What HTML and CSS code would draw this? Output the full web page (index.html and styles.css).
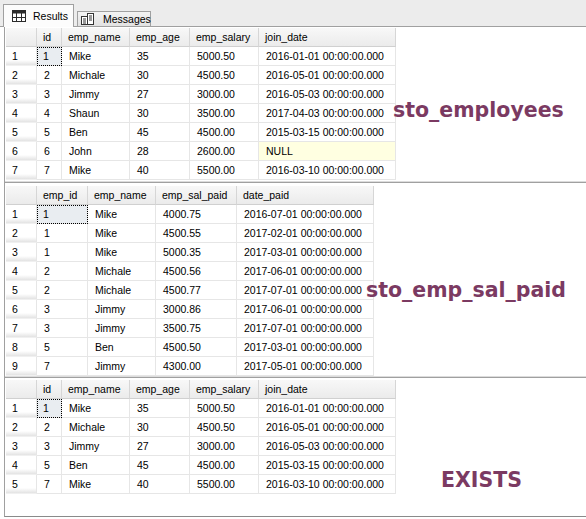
FILE: index.html
```html
<!DOCTYPE html>
<html>
<head>
<meta charset="utf-8">
<link rel="stylesheet" href="styles.css">
</head>
<body>
<div class="tabs">
  <div class="tab active">
    <svg class="ico" width="14" height="12" viewBox="0 0 14 12"><rect x="0.5" y="0.5" width="13" height="11" fill="#fff" stroke="#2b2b2b"/><rect x="0" y="0" width="14" height="3.5" fill="#2b2b2b"/><path d="M0 7.5h14M4.5 3v9M9.5 3v9" stroke="#2b2b2b" fill="none"/></svg>
    <span>Results</span>
  </div>
  <div class="tab">
    <svg class="ico" width="13" height="12" viewBox="0 0 13 12"><rect x="6.5" y="0.5" width="6" height="11" fill="#fff" stroke="#333"/><path d="M8 3h3M8 5h3M8 7h3" stroke="#333"/><rect x="0.5" y="3.5" width="6" height="8" fill="#fff" stroke="#333"/><path d="M2 6h3M2 8h3M2 10h3" stroke="#333"/></svg>
    <span>Messages</span>
  </div>
</div>
<div class="results">
  <div class="pane pane1">
    <table class="grid g1">
      <colgroup><col class="c-rh"><col class="c-id"><col class="c-name"><col class="c-age"><col class="c-sal"><col class="c-date"></colgroup>
      <thead><tr><th class="rh"></th><th>id</th><th>emp_name</th><th>emp_age</th><th>emp_salary</th><th>join_date</th></tr></thead>
      <tbody>
        <tr><td class="rh">1</td><td class="sel">1</td><td>Mike</td><td>35</td><td>5000.50</td><td>2016-01-01 00:00:00.000</td></tr>
        <tr><td class="rh">2</td><td>2</td><td>Michale</td><td>30</td><td>4500.50</td><td>2016-05-01 00:00:00.000</td></tr>
        <tr><td class="rh">3</td><td>3</td><td>Jimmy</td><td>27</td><td>3000.00</td><td>2016-05-03 00:00:00.000</td></tr>
        <tr><td class="rh">4</td><td>4</td><td>Shaun</td><td>30</td><td>3500.00</td><td>2017-04-03 00:00:00.000</td></tr>
        <tr><td class="rh">5</td><td>5</td><td>Ben</td><td>45</td><td>4500.00</td><td>2015-03-15 00:00:00.000</td></tr>
        <tr><td class="rh">6</td><td>6</td><td>John</td><td>28</td><td>2600.00</td><td class="null">NULL</td></tr>
        <tr><td class="rh">7</td><td>7</td><td>Mike</td><td>40</td><td>5500.00</td><td>2016-03-10 00:00:00.000</td></tr>
      </tbody>
    </table>
    <div class="label l1">sto_employees</div>
  </div>
  <div class="pane pane2">
    <table class="grid g2">
      <colgroup><col class="c-rh"><col class="c-eid"><col class="c-name2"><col class="c-paid"><col class="c-date2"></colgroup>
      <thead><tr><th class="rh"></th><th>emp_id</th><th>emp_name</th><th>emp_sal_paid</th><th>date_paid</th></tr></thead>
      <tbody>
        <tr><td class="rh">1</td><td class="sel">1</td><td>Mike</td><td>4000.75</td><td>2016-07-01 00:00:00.000</td></tr>
        <tr><td class="rh">2</td><td>1</td><td>Mike</td><td>4500.55</td><td>2017-02-01 00:00:00.000</td></tr>
        <tr><td class="rh">3</td><td>1</td><td>Mike</td><td>5000.35</td><td>2017-03-01 00:00:00.000</td></tr>
        <tr><td class="rh">4</td><td>2</td><td>Michale</td><td>4500.56</td><td>2017-06-01 00:00:00.000</td></tr>
        <tr><td class="rh">5</td><td>2</td><td>Michale</td><td>4500.77</td><td>2017-07-01 00:00:00.000</td></tr>
        <tr><td class="rh">6</td><td>3</td><td>Jimmy</td><td>3000.86</td><td>2017-06-01 00:00:00.000</td></tr>
        <tr><td class="rh">7</td><td>3</td><td>Jimmy</td><td>3500.75</td><td>2017-07-01 00:00:00.000</td></tr>
        <tr><td class="rh">8</td><td>5</td><td>Ben</td><td>4500.50</td><td>2017-03-01 00:00:00.000</td></tr>
        <tr><td class="rh">9</td><td>7</td><td>Jimmy</td><td>4300.00</td><td>2017-05-01 00:00:00.000</td></tr>
      </tbody>
    </table>
    <div class="label l2">sto_emp_sal_paid</div>
  </div>
  <div class="pane pane3">
    <table class="grid g1">
      <colgroup><col class="c-rh"><col class="c-id"><col class="c-name"><col class="c-age"><col class="c-sal"><col class="c-date"></colgroup>
      <thead><tr><th class="rh"></th><th>id</th><th>emp_name</th><th>emp_age</th><th>emp_salary</th><th>join_date</th></tr></thead>
      <tbody>
        <tr><td class="rh">1</td><td class="sel">1</td><td>Mike</td><td>35</td><td>5000.50</td><td>2016-01-01 00:00:00.000</td></tr>
        <tr><td class="rh">2</td><td>2</td><td>Michale</td><td>30</td><td>4500.50</td><td>2016-05-01 00:00:00.000</td></tr>
        <tr><td class="rh">3</td><td>3</td><td>Jimmy</td><td>27</td><td>3000.00</td><td>2016-05-03 00:00:00.000</td></tr>
        <tr><td class="rh">4</td><td>5</td><td>Ben</td><td>45</td><td>4500.00</td><td>2015-03-15 00:00:00.000</td></tr>
        <tr><td class="rh">5</td><td>7</td><td>Mike</td><td>40</td><td>5500.00</td><td>2016-03-10 00:00:00.000</td></tr>
      </tbody>
    </table>
    <div class="label l3">EXISTS</div>
  </div>
</div>
</body>
</html>
```

FILE: styles.css
```css
* { box-sizing: border-box; }
html, body { margin: 0; padding: 0; }
body {
  width: 586px;
  height: 519px;
  overflow: hidden;
  background: #fff;
  font-family: "Liberation Sans", Arial, sans-serif;
  font-size: 10.5px;
  color: #000;
}
.tabs {
  height: 27px;
  background: #ececec;
  border-bottom: 1px solid #a0a0a0;
  display: flex;
  align-items: flex-end;
  padding-left: 3px;
  gap: 3px;
}
.tab {
  display: flex;
  align-items: center;
  border: 1px solid #a0a0a0;
  border-bottom: none;
  white-space: nowrap;
}
.tab.active {
  width: 71px;
  height: 23px;
  margin-bottom: -1px;
  background: #fcfcfc;
  padding-left: 8px;
  gap: 7px;
  padding-bottom: 1px;
}
.tab:not(.active) {
  width: 74px;
  height: 15px;
  background: linear-gradient(#f3f3f3, #e2e2e2);
  padding-left: 3px;
  gap: 9px;
  padding-bottom: 0;
}
.ico { display: block; flex: none; }
.tab span { font-size: 10.5px; line-height: 12px; }

.results {
  height: 490px;
  margin-left: 4px;
  border-left: 1px solid #a0a0a0;
  border-bottom: 1px solid #8a8a8a;
  display: flex;
  flex-direction: column;
}
.pane {
  position: relative;
  padding-left: 1px;
  flex: none;
}
.pane1 {
  height: 156px;
  padding-top: 1px;
  border-bottom: 1px solid #a0a0a0;
  box-shadow: inset 0 -1px 0 #dcdcdc;
}
.pane2 {
  height: 195px;
  padding-top: 3px;
  border-bottom: 1px solid #a0a0a0;
  box-shadow: inset 0 -1px 0 #dcdcdc;
}
.pane3 {
  flex: 1;
  padding-top: 2px;
}

.grid {
  border-collapse: separate;
  border-spacing: 0;
  table-layout: fixed;
}
.g1 { width: 390px; }
.g2 { width: 368px; }
.c-rh { width: 31px; }
.c-id { width: 25px; }
.c-name { width: 68px; }
.c-age { width: 60px; }
.c-sal { width: 69px; }
.c-date { width: 137px; }
.c-eid { width: 51px; }
.c-name2 { width: 68px; }
.c-paid { width: 81px; }
.c-date2 { width: 137px; }

.grid th, .grid td {
  box-sizing: border-box;
  padding: 0 0 0 6px;
  text-align: left;
  font-weight: normal;
  white-space: nowrap;
  overflow: hidden;
  vertical-align: middle;
}
.grid th {
  height: 19px;
  background: linear-gradient(#f8f8f8, #ebebeb);
  border-right: 1px solid #d6d6d6;
  border-bottom: 1px solid #d0d0d0;
}
.grid td {
  height: 19px;
  padding-left: 7px;
  border-right: 1px solid #e6e6e6;
  border-bottom: 1px solid #e6e6e6;
}
.grid td.rh {
  background: linear-gradient(#ffffff 0, #ffffff 72%, #e3e3e3 100%);
  border-bottom: 1px solid #f0f0f0;
  padding-left: 6px;
}
.grid td.sel {
  padding-left: 6px;
  background: #e9edf1;
  outline: 1px dotted #000;
  outline-offset: -1px;
}
.grid td.null { background: #ffffe1; }

.label {
  position: absolute;
  font-family: "DejaVu Sans", Verdana, sans-serif;
  font-weight: bold;
  font-size: 20.5px;
  line-height: 24px;
  color: #7b3a62;
  white-space: nowrap;
}
.l1 { left: 388px; top: 71px; }
.l2 { left: 361px; top: 95px; }
.l3 { left: 436px; top: 90px; }
```
